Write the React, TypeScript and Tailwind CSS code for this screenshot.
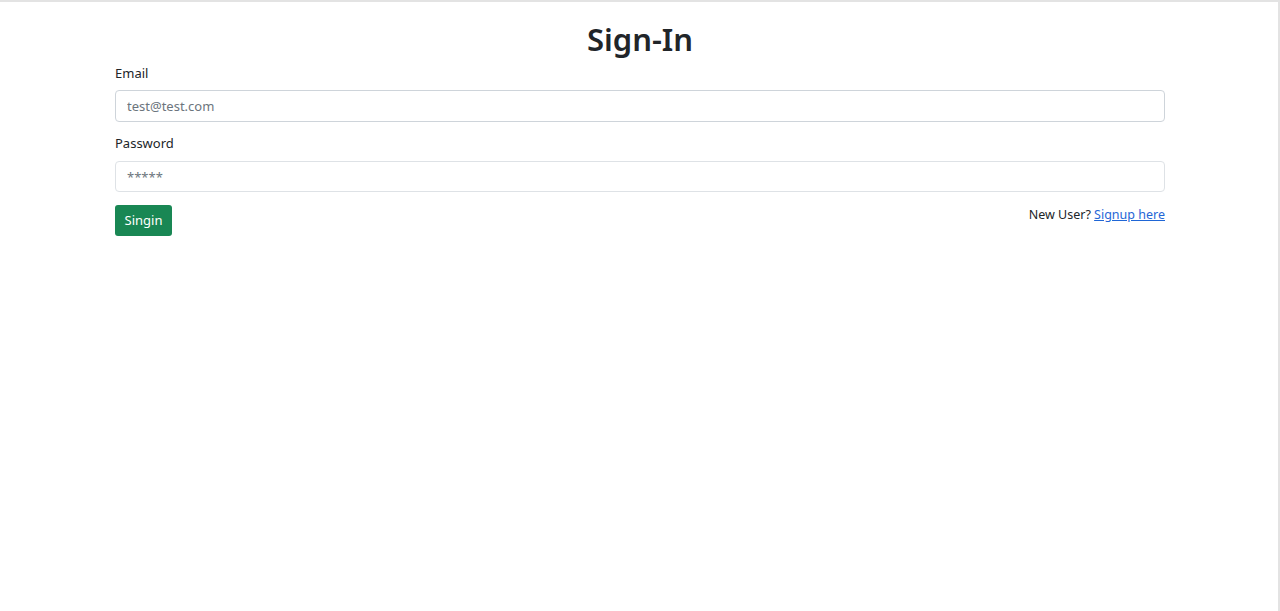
export default function App() {
  return (
    <div className="min-h-[611px] bg-white border-t-2 border-r-2 border-[#e3e3e3] text-[#212529]" style={{ fontFamily: '"Noto Sans", "Open Sans", sans-serif' }}>
      <div className="w-[1050px] ml-[115px] pt-[15px]">
        <h1 className="text-center text-[31px] font-[560] leading-[44px] mb-[2px]">Sign-In</h1>

        <form className="flex flex-col">
          <label className="text-[13px] leading-[20px] mb-[7px]">Email</label>
          <input
            type="email"
            placeholder="test@test.com"
            className="h-[32px] border border-[#ced4da] rounded-[4px] px-[11px] text-[13px] placeholder:text-[#6c757d] mb-[11px]"
          />
          <label className="text-[13px] leading-[20px] mb-[8px]">Password</label>
          <input
            type="password"
            placeholder="*****"
            className="h-[31px] border border-[#dee2e6] rounded-[4px] px-[11px] text-[13px] placeholder:text-[#6c757d] mb-[13px]"
          />
          <div className="flex items-start justify-between">
            <button type="button" className="h-[31px] w-[57px] bg-[#198754] text-white text-[13px] rounded-[3px]">
              Singin
            </button>
            <p className="text-[12.5px] leading-[20px]">
              New User? <a href="#" className="text-[#1f66d6] underline">Signup here</a>
            </p>
          </div>
        </form>
      </div>
    </div>
  );
}
